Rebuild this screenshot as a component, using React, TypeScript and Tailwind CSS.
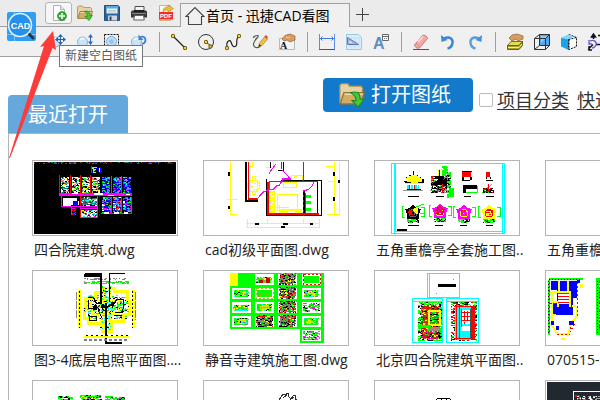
import type { ReactNode } from 'react';

const RED = '#ff0000';
const GREEN = '#00ff00';
const YELLOW = '#ffff00';
const CYAN = '#00ffff';
const MAGENTA = '#ff00ff';
const BLUE = '#0000ff';
const BLACK = '#000000';
const WHITE = '#ffffff';

type NoiseProps = {
  x: number;
  y: number;
  w: number;
  h: number;
  colors: string[];
  density?: number;
  seed?: number;
};

// Dense linework collapses to coloured specks at thumbnail size
function Noise({ x, y, w, h, colors, density = 0.5, seed = 1 }: NoiseProps) {
  const paths = colors.map(() => '');
  let s = (seed * 7919 + x * 131 + y * 17 + 11) % 2147483647;
  const rand = () => {
    s = (s * 48271) % 2147483647;
    return s / 2147483647;
  };
  for (let i = 0; i < 5; i++) rand();
  for (let j = 0; j < h; j++) {
    let i = 0;
    while (i < w) {
      // short runs read as strokes rather than as grain
      const run = Math.min(w - i, rand() < 0.45 ? 2 : 1);
      const hit = rand() < density;
      const k = Math.floor(rand() * colors.length);
      if (hit) paths[k] += `M${x + i} ${y + j}h${run}v1h-${run}z`;
      i += run;
    }
  }
  return (
    <>
      {paths.map((d, i) => (
        <path key={i} d={d} fill={colors[i]} />
      ))}
    </>
  );
}

function Thumb({ children }: { children?: ReactNode }) {
  return (
    <svg viewBox="0 0 142 72" className="block w-full h-[72px]" shapeRendering="crispEdges" fill="none" aria-hidden="true">
      {children}
    </svg>
  );
}

function CourtyardThumb() {
  const bright = [WHITE, GREEN, YELLOW, '#008080', BLACK, '#ff8080', WHITE];
  const cool = [CYAN, '#4080ff', MAGENTA, '#008080', BLACK, GREEN, '#8080ff'];
  return (
    <Thumb>
      <rect width="142" height="72" fill={BLACK} />
      <Noise x={0} y={0} w={142} h={2} colors={['#800000', '#008040', '#202080', '#606060', '#400000']} density={0.55} />
      <path d="M57 4h1v7h-1z" fill={RED} />
      <Noise x={58} y={5} w={5} h={6} colors={[CYAN, BLUE, '#80ff80']} density={0.7} />
      <path d="M65 5h2v1h1v4h-1v1h-2v-1h-1v-4h1z" fill={BLUE} />
      <path d="M65 6h1v4h-1z" fill={WHITE} />
      {[27, 38, 48, 58].map((x) => (
        <Noise key={x} x={x} y={15} w={8} h={16} colors={bright} density={0.9} />
      ))}
      {[68, 79, 89].map((x) => (
        <g key={x}>
          <rect x={x} y="15" width="8" height="16" fill={BLUE} />
          <Noise x={x} y={15} w={8} h={16} colors={cool} density={0.55} />
          <rect x={x} y="36" width="8" height="14" fill={BLUE} />
          <Noise x={x} y={35} w={9} h={16} colors={[...cool, RED, WHITE, MAGENTA]} density={0.75} />
        </g>
      ))}
      <path d="M77 14h1v17h-1zM87 14h1v17h-1zM77 35h1v16h-1zM87 35h1v16h-1zM97 35h1v16h-1z" fill={MAGENTA} />
      <path d="M25 13h1v19h-1zM36 13h1v19h-1zM46 13h1v43h-1zM56 13h1v18h-1z" fill={RED} />
      <path d="M25 31h73v3h-73z" fill={MAGENTA} />
      <path d="M38 31h6v1h-6zM60 31h9v2h-9zM74 33h6v1h-6zM92 32h4v1h-4z" fill={WHITE} />
      <path d="M27 34h1v11h-1zM27 44h37v1h-37zM63 34h1v22h-1zM46 55h18v1h-18zM46 46h18v1h-18zM37 45h1v8h-1z" fill={MAGENTA} />
      <path d="M29 36h14v3h2v4h-8v1h-8z" fill={WHITE} />
      <path d="M39 39h5v5h-5z" fill={BLUE} />
      <path d="M48 36h15v7h-15z" fill="#408080" />
      <Noise x={47} y={35} w={16} h={9} colors={[WHITE, '#505050', CYAN, '#204040', GREEN]} density={0.6} />
      <Noise x={47} y={48} w={16} h={7} colors={[CYAN, WHITE, MAGENTA, YELLOW, '#408080', WHITE]} density={0.85} />
      <Noise x={38} y={46} w={4} h={7} colors={[BLUE, RED, MAGENTA]} density={0.7} />
      <path d="M67 51h31v1h-31z" fill={MAGENTA} />
      <path d="M70 50h5v2h-5zM80 50h5v2h-5zM90 50h4v2h-4z" fill={WHITE} />
      <path d="M65 34h1v20h-1z" fill={BLUE} />
    </Thumb>
  );
}

function FloorPlanThumb() {
  return (
    <Thumb>
      <g stroke={YELLOW}>
        <path d="M25.500 0v53M22 37.500h11M25 52.500h8M129.500 0v53M134.500 0v53M121 4.500h8M123 19.500h6M122 52.500h13" />
        <path d="M41 61.500h74M41 65.500h74M42.500 57v9M62.500 57v5M98.500 57v5M114.500 57v9" />
        <path d="M43.500 0v4.500h4v-4.500" />
        <path d="M44.500 18.500h8v11h-8zM47.500 14.500h3v4h-3zM47.500 29.500h3v3h-3zM42.500 21.500h2v5h-2zM52.500 20.500h2v6h-2z" />
        <path d="M78.500 20.500h13v5h-13zM72.500 32.500h20v16h-20zM64 45.500h20M74.500 42.500v9M76 47.500h20v5h-20" />
        <path d="M86.500 13.500h11v5h-11zM61 5.500h7v-5" />
      </g>
      <path d="M64 29h6v22h-6z" fill={YELLOW} />
      <Noise x={65} y={29} w={4} h={22} colors={[WHITE]} density={0.3} />
      <path d="M75 48h8v4h-8zM90 48h7v4h-7zM89 14h3v2h-3z" fill={YELLOW} />
      <Noise x={46} y={20} w={6} h={9} colors={[YELLOW]} density={0.35} />
      <path d="M41 0h1v38h11v2h-13v-40zM61 17h1v37h-1zM61 53h56v1h-56zM116 18h1v36h-1zM76 18h41v1h-41zM98 28h2v25h-2zM78 0h1v9h-6v-1h5zM112 20h1v32h-1zM65 0h1v6h-1z" fill={BLACK} />
      <path d="M43 0h1v36h9v2h-10zM62 20h2v32h-2zM62 51h52v2h-52zM76 0h1v7h-1zM98 0h1v19h-1zM64 19h49v1h-49zM100 31h1v21h-1z" fill={RED} />
      <path d="M98.500 28v26" stroke={RED} strokeDasharray="2 3" />
      <path d="M52.500 37l2-3 4-4 5-2 5-1 3-3 3-1 3-5M77 8l4 4 2 2 2 3M64 12l3-5 4-5M99 29l5-2 3-3 2-4M64.500 27v-7" stroke={MAGENTA} />
      <path d="M77 16h9v2h-9z" fill={MAGENTA} />
      <path d="M23 10h2v4h-2zM23 44h2v3h-2zM128 10h2v4h-2zM128 35h2v4h-2zM133 18h2v3h-2zM50 61h4v2h-4zM78 61h5v2h-5zM105 61h3v2h-3zM76 64h4v2h-4z" fill={BLACK} />
      <path d="M101 33h5v3h-5zM101 39h5v3h-5zM101 46h5v3h-5z" fill={GREEN} />
    </Thumb>
  );
}

function Rosette({ x, y, fill, inner }: { x: number; y: number; fill: string; inner: string }) {
  return (
    <g>
      <path d={`M${x - 9} ${y - 6}h-2v11h3M${x + 8} ${y - 5}h3v9h-3`} stroke={GREEN} />
      <path d={`M${x} ${y - 8}l3 4 5 1-2 5 0 5h-12l0-5-2-5 5-1z`} fill={fill} />
      <path d={`M${x} ${y - 3}l4 3-1 4h-6l-1-4z`} stroke={inner} />
      <Noise x={x - 3} y={y - 2} w={7} h={5} colors={[inner, RED]} density={0.35} />
      <Noise x={x - 6} y={y + 7} w={12} h={4} colors={[GREEN, BLACK, GREEN]} density={0.8} />
    </g>
  );
}

function PavilionThumb() {
  return (
    <Thumb>
      <path d="M15 1h114v1h-114zM15 1h1v71h-1zM128 1h1v71h-1zM15 71h114v1h-114zM18 2h1v69h-1zM19 2h1v68h-1zM126 2h1v69h-1zM18 69h108v1h-108z" fill={CYAN} />
      <path d="M37 9h1v4h-1zM33 13h9v2h-9zM30 15h15v2h-15z" fill={BLACK} />
      <path d="M32 15l4-2h4l6 4h-17zM29 19l6-2h7l5 2v3h-18z" fill={YELLOW} />
      <path d="M28 19h3v1h4v1h-6zM42 20h4v-3h2v4h-6z" fill={BLACK} />
      <path d="M31 23h2v4h-2zM35 23h2v4h-2zM39 23h2v4h-2zM42 23h1v4h-1z" fill={CYAN} />
      <path d="M33.500 23v5M38.500 23v5" stroke={RED} />
      <Noise x={30} y={27} w={15} h={2} colors={[BLACK]} density={0.85} />
      <path d="M27 28.500h20M54 28.500h20" stroke="#999999" />
      <Noise x={55} y={14} w={16} h={17} colors={[BLACK, BLACK, BLACK, RED, GREEN, '#888888']} density={0.75} />
      <path d="M62 8h2v6h4v3h-9v-3h3z" fill={BLACK} />
      <path d="M56 22l8-6 8 4-3 4z" fill={BLACK} />
      <path d="M61.500 23v8M66.500 22v9" stroke={RED} />
      <Noise x={66} y={4} w={6} h={10} colors={[GREEN]} density={0.85} />
      <Noise x={71} y={10} w={4} h={26} colors={[GREEN, GREEN, BLACK]} density={0.85} />
      <path d="M73 26h5v9h-5z" fill={GREEN} />
      <path d="M62.500 14V7.500h5" stroke={YELLOW} />
      <path d="M86 10h9v5h-9zM110 10h4v5h-4z" fill={RED} />
      <path d="M86 9h10v1h-10zM86 15h2v3h-2zM94 15h2v3h-2zM110 15h1v2h-1zM114 15h1v2h-1z" fill={BLACK} />
      <path d="M87 23h14v4h-11v4h-3z" fill={BLACK} />
      <path d="M101.500 24v6M90 30.500h12M116 22l-9 8h10" stroke={GREEN} />
      <Noise x={107} y={26} w={11} h={5} colors={[BLACK, BLACK, RED]} density={0.85} />
      <path d="M112.500 22v7" stroke={RED} />
      <Rosette x={37} y={50} fill={BLACK} inner="#606060" />
      <path d="M38 46h4v6h-2l-3-3z" fill={YELLOW} />
      <path d="M33 47l4 2-2 4-3-2z" fill={RED} />
      <path d="M40 45l8-3M44 51.500h4" stroke={GREEN} />
      <Rosette x={64} y={49} fill={MAGENTA} inner={YELLOW} />
      <path d="M64 44l5 3-2 6h-6l-2-6z" fill="#dd1010" />
      <Noise x={60} y={46} w={8} h={7} colors={[YELLOW, MAGENTA]} density={0.25} />
      <Rosette x={88} y={50} fill={MAGENTA} inner={YELLOW} />
      <Rosette x={113} y={50} fill={YELLOW} inner={RED} />
      <path d="M32 34.500h11M60 34.500h8M88 34.500h7M110 34.500h8M32 63.500h11M59 63.500h8M84 63.500h7M110 63.500h7M86 18.500h8M110 18.500h7" stroke={BLACK} />
      <path d="M21 67h10v2h-10z" fill={BLACK} />
    </Thumb>
  );
}

function LightingThumb() {
  return (
    <Thumb>
      <Noise x={50} y={6} w={44} h={2} colors={['#808080']} density={0.6} />
      <Noise x={50} y={9} w={45} h={3} colors={[GREEN, GREEN, '#909090']} density={0.65} />
      <Noise x={54} y={23} w={39} h={24} colors={[BLACK, YELLOW, CYAN, GREEN, '#808080']} density={0.4} />
      <path d="M51 26h10v-6h6v-4h13v3h13v10h2v13h-6v7h-12v10h-9v-8h-14v-5h-4v-9h1z" stroke={YELLOW} strokeWidth="3" />
      <path d="M70 17v40M76 17v38M57 28h28v15h-27z" stroke={YELLOW} strokeWidth="2" />
      <Noise x={66} y={14} w={11} h={44} colors={[BLACK, YELLOW, CYAN, GREEN, YELLOW]} density={0.45} />
      <Noise x={50} y={28} w={45} h={14} colors={[YELLOW, CYAN, GREEN, BLACK]} density={0.2} />
      <path d="M53.500 25.500h6l3 6h5l5 3 8-3 2-4h7v8l-2 5h-7M54.500 28v8h5l3-5M64 38l4 8M55.500 44.500h7v4h-7zM80 43.500h8M61 32l5 7" stroke={BLACK} />
      <path d="M59 34h4v4h-4zM67 33h5v3h-5zM77 30h3v4h-3z" fill={BLACK} />
      <path d="M50 2h18v3h-18zM66 2h2v29h-2zM75 1h1v29h-1zM51 1h17v1h-17zM76 1h15v1h-15zM71 31h2v40h-2zM71 70h17v2h-17z" fill={BLACK} />
      <path d="M45 18v38M99 18v38" stroke={YELLOW} strokeWidth="3" strokeDasharray="3 1" />
      <path d="M45.500 19v37M98.500 19v37" stroke={BLACK} strokeDasharray="2 2" />
      <path d="M42.500 20v27M101.500 20v28" stroke="#808080" strokeDasharray="8 1" />
      <path d="M50 65h45" stroke={YELLOW} strokeWidth="2" />
      <path d="M52 63.500h42" stroke={BLACK} strokeDasharray="2 3" />
      <path d="M50 68h45" stroke="#808080" strokeWidth="2" strokeDasharray="3 2" />
    </Thumb>
  );
}

const SHEETS = [
  [27, 3, 'cover'], [50, 3, 'elev'], [73, 3, 'dark'], [97, 3, 'roof'],
  [27, 17, 'plan'], [50, 17, 'roof'], [73, 17, 'dark'], [97, 17, 'plan'],
  [27, 31, 'elev'], [50, 31, 'plan'], [73, 31, 'dark'], [97, 31, 'parts'],
  [27, 45, 'plan'], [50, 45, 'dark'], [73, 45, 'dark'], [97, 45, 'plan'],
  [97, 59, 'parts'],
] as const;

function TempleThumb() {
  return (
    <Thumb>
      <path d="M25 1h94v70h-24v-14h-70z" fill={GREEN} />
      <path d="M25 1h8v13h-8z" fill={YELLOW} />
      {SHEETS.map(([x, y, kind]) => {
        if (kind === 'cover') return null;
        return (
          <g key={`${x}-${y}`}>
            <rect x={x} y={y - 1} width="19" height="11" fill={WHITE} />
            {kind === 'dark' && (
              <>
                <rect x={x + 2} y={y - 1} width="15" height="10" fill="#808080" />
                <Noise x={x + 1} y={y - 2} w={17} h={12} colors={[BLACK, BLACK, RED, YELLOW, GREEN, '#408040']} density={0.65} />
              </>
            )}
            {kind === 'roof' && (
              <>
                <rect x={x + 2} y={y + 1} width="15" height="7" fill={GREEN} />
                <rect x={x + 1.5} y={y - 0.5} width="17" height="10" stroke={y < 10 ? RED : '#a0c020'} strokeDasharray="2 2" />
                {y > 10 && <path d={`M${x + 2} ${y + 8}l7-4 8 4`} stroke="#c0a000" />}
              </>
            )}
            {kind === 'elev' && (
              <>
                <rect x={x + 2} y={y + 2} width="14" height="6" fill="#60c040" />
                <Noise x={x + 1} y={y + 2} w={16} h={6} colors={[YELLOW, GREEN, BLACK, GREEN]} density={0.55} />
                {y < 10 ? (
                  <path d={`M${x + 4} ${y + 5}h4v3h-4zM${x + 11} ${y + 3}h4v5h-4z`} fill="#cc0000" />
                ) : (
                  <path d={`M${x + 4} ${y + 7}h11v1h-11z`} fill={CYAN} />
                )}
              </>
            )}
            {kind === 'plan' && (
              <>
                <rect x={x + 2} y={y + 1} width="14" height="7" fill={GREEN} />
                <rect x={x + 5} y={y + 2} width="9" height="5" fill="#d8e010" />
                <Noise x={x + 2} y={y + 1} w={15} h={7} colors={[YELLOW, CYAN, GREEN, BLACK, GREEN, '#808080']} density={0.4} />
              </>
            )}
            {kind === 'parts' && (
              <Noise x={x + 1} y={y} w={17} h={9} colors={[GREEN, BLACK, GREEN, '#808080', GREEN, MAGENTA]} density={0.6} />
            )}
          </g>
        );
      })}
    </Thumb>
  );
}

function BeijingThumb() {
  return (
    <Thumb>
      <path d="M51.500 1.500h32v24h-32zM53.500 1v24M36.500 26.500h30v44h-30zM70.500 26.500h32v44h-32zM37 29.500h29M71 29.500h31" stroke={CYAN} />
      <path d="M62 12h18v3h-18z" fill={BLACK} />
      <path d="M77 7h1v1h-1zM60 21h1v1h-1z" fill="#909090" />
      <Noise x={42} y={30} w={24} h={39} colors={[GREEN, GREEN, BLACK, GREEN]} density={0.75} />
      <rect x="46" y="34" width="17" height="33" fill="#cc2010" />
      <Noise x={45} y={33} w={19} h={34} colors={[RED, YELLOW, GREEN, MAGENTA, '#805020', BLACK]} density={0.6} />
      <path d="M52.500 38.500h11v14h-11z" stroke={YELLOW} strokeWidth="2" />
      <path d="M54 41h8v11h-8z" fill="#20a030" />
      <Noise x={54} y={41} w={8} h={11} colors={[GREEN, BLACK, YELLOW]} density={0.4} />
      <path d="M42 54h11v3h12" stroke={GREEN} strokeWidth="3" />
      <path d="M53 55h11v4h-11z" fill="#b08080" />
      <Noise x={75} y={30} w={26} h={39} colors={[BLACK, GREEN, '#008000', RED]} density={0.6} />
      <rect x="79" y="34" width="19" height="34" fill={CYAN} />
      <path d="M95 34h4v34h-4z" fill={RED} />
      <path d="M78 34.500h20M80.500 31v37M83.500 34v33M78 66.500h20" stroke={RED} />
      <path d="M86 38h9v14h-9z" fill={WHITE} />
      <path d="M86 40.500h8M86 44.500h8M86 48.500h8M88.500 39v13M91.500 39v13" stroke={RED} />
      <path d="M87.500 53v-4h4v4" stroke={YELLOW} />
      <path d="M85 54h9v5h-9z" fill={WHITE} />
      <path d="M85.500 37v18M94.500 37v30" stroke="#306060" />
    </Thumb>
  );
}

function VillaThumb() {
  return (
    <Thumb>
      <path d="M2 6h34v2h-34zM1 8h2v55h-2zM49 6h4v57h-4z" fill={GREEN} />
      <path d="M2 7.500h33M1.500 9v53M50.500 9v52" stroke={BLACK} strokeDasharray="1 2" />
      <path d="M4 9h26v17h-4v17h-22v-13h6v-12h-6z" fill={BLUE} />
      <path d="M11 20h11v12h-11z" fill={WHITE} />
      <path d="M11.500 9v10M20.500 9v10M3 19.500h19M4 29.500h7v5M22.500 19v16M4 42.500h5M25 34h4M4.500 19v34l6 9h11l2-9 6-9v-9" stroke={YELLOW} strokeWidth="2" />
      <path d="M11 21.500h11M11 24.500h11M11 27.500h11M11 30.500h11" stroke={RED} />
      <path d="M2.500 10v50M30.500 10v34M3 31.500h7M10 62.500h13M23 55v5l5-9" stroke={RED} strokeDasharray="2 2" />
      <path d="M4 49h3v4h-3zM9 54h3v4h-3zM22 49h5v4h-5zM30 8h3v3h-3z" fill={BLUE} />
      <path d="M33 12h3v4h-3zM14 66h4v2h-4z" fill={YELLOW} />
      <Noise x={52} y={8} w={5} h={50} colors={[MAGENTA, BLUE, '#808080', YELLOW]} density={0.9} />
    </Thumb>
  );
}

function ElevationThumb() {
  return (
    <Thumb>
      <Noise x={24} y={14} w={12} h={8} colors={[GREEN, BLACK]} density={0.75} />
      <path d="M36 16h3M46 14h21M71 15h8" stroke={GREEN} strokeWidth="2" />
      <Noise x={46} y={13} w={22} h={9} colors={[GREEN, YELLOW, BLACK, '#808080']} density={0.75} />
      <Noise x={71} y={15} w={20} h={8} colors={[BLACK, '#808080', GREEN]} density={0.7} />
    </Thumb>
  );
}

function SketchThumb() {
  return (
    <Thumb>
      <path d="M72 21l6-9h3v-1h2v3l3 3 3-4h1v3l3 4M78 16l4-3M85 18l4-3" stroke="#303030" />
    </Thumb>
  );
}

function ArcThumb() {
  return (
    <Thumb>
      <path d="M54 18.500h5l3-2h11l3 2h5M65.500 16v4M70.500 16v4" stroke={BLACK} />
    </Thumb>
  );
}

function SectionThumb() {
  return (
    <Thumb>
      <rect width="142" height="72" fill="#212830" />
      <path d="M26.500 72V9.500H142" stroke={WHITE} />
      <path d="M28 13h5v2h-5z" fill={RED} />
      <Noise x={30} y={14} w={10} h={6} colors={[WHITE, '#808080']} density={0.5} />
      <Noise x={41} y={14} w={16} h={6} colors={[WHITE, '#a0a0a0']} density={0.5} />
    </Thumb>
  );
}

const files: { name: string; thumb: ReactNode }[] = [
  { name: '四合院建筑.dwg', thumb: <CourtyardThumb /> },
  { name: 'cad初级平面图.dwg', thumb: <FloorPlanThumb /> },
  { name: '五角重檐亭全套施工图..', thumb: <PavilionThumb /> },
  { name: '五角重檐亭全套施工图..', thumb: <Thumb /> },
  { name: '图3-4底层电照平面图....', thumb: <LightingThumb /> },
  { name: '静音寺建筑施工图.dwg', thumb: <TempleThumb /> },
  { name: '北京四合院建筑平面图..', thumb: <BeijingThumb /> },
  { name: '070515-1.dwg', thumb: <VillaThumb /> },
  { name: '立面图.dwg', thumb: <ElevationThumb /> },
  { name: '大样图.dwg', thumb: <SketchThumb /> },
  { name: '节点图.dwg', thumb: <ArcThumb /> },
  { name: '剖面图.dwg', thumb: <SectionThumb /> },
];

function Icon({ children }: { children: ReactNode }) {
  return (
    <svg viewBox="0 0 16 16" className="w-4 h-4 shrink-0 overflow-visible" fill="none" aria-hidden="true">
      {children}
    </svg>
  );
}

function Dot({ x, y }: { x: number; y: number }) {
  return <rect x={x - 1.5} y={y - 1.5} width="3" height="3" rx="0.8" fill="#ffd21e" stroke="#5a4300" />;
}

function FolderShape() {
  return (
    <>
      <path d="M.5 13V2L1.500 1h4l1 1.500h7l1 1v3" fill="#e6d3a3" stroke="#a98a4a" strokeWidth=".8" />
      <path d="M.8 13.500l2.200-7h12.500l-2 7z" fill="#d2ad62" stroke="#94733a" strokeWidth=".8" />
      <path d="M3.500 7.500h11" stroke="#f3e2b4" strokeWidth=".8" />
      <path d="M7 6.500c4-1 6 0 6 4h2.500l-3.700 5-3.800-4h2.500c0-2.500-1-3.500-3.500-5z" fill="#45c83c" stroke="#1f8a24" strokeWidth=".7" />
    </>
  );
}

const fileTools: { label: string; icon: ReactNode }[] = [
  {
    label: '新建空白图纸',
    icon: (
      <>
        <path d="M2.500.5h7l4 4v11h-11z" fill="#fdfdfd" stroke="#b0b0b0" />
        <path d="M9.500.5v4h4" fill="#e8e8e8" stroke="#b0b0b0" />
        <circle cx="11" cy="11" r="4.500" fill="#2faa32" stroke="#1c8423" strokeWidth=".6" />
        <path d="M11 8v6M8 11h6" stroke="#fff" strokeWidth="1.600" />
      </>
    ),
  },
  { label: '打开', icon: <FolderShape /> },
  {
    label: '保存',
    icon: (
      <>
        <path d="M.5.5h13.500l1.500 1.500v13.500h-15z" fill="#2e6399" stroke="#254f7c" />
        <path d="M2.500 1h11v7.500h-11z" fill="#e9f2fa" />
        <path d="M2.500 1h11v2.500h-11z" fill="#5fa8e6" />
        <path d="M4 10.500h9v5h-9z" fill="#cfd6dc" />
        <path d="M5.500 11.500h2v4h-2z" fill="#27486a" />
        <path d="M4 5.500h8M4 7h8" stroke="#b9c9d8" />
      </>
    ),
  },
  {
    label: '打印',
    icon: (
      <>
        <path d="M4 1.500h9v5h-9z" fill="#f4f4f4" stroke="#505050" />
        <path d="M0 6.500l1-1h14l1 1v6h-16z" fill="#3a3a3a" />
        <path d="M3 5h10v2h-10z" fill="#1e1e1e" />
        <path d="M3.500 10.500h9l.8 4.500h-10.600z" fill="#fafafa" stroke="#606060" />
        <path d="M1 8.500h14" stroke="#858585" />
      </>
    ),
  },
  {
    label: '导出PDF',
    icon: (
      <>
        <path d="M1.500.5h11v15h-11z" fill="#fffaf0" stroke="#d4b088" />
        <path d="M5 7c0-4 2-5 5-5V0l5.500 3.500L10 7V5C8 5 6.500 5 5 7z" fill="#f0bd39" stroke="#b8862a" strokeWidth=".6" />
        <rect x="1" y="7" width="14" height="7.500" fill="#ee3124" />
        <text x="8" y="13" textAnchor="middle" fontSize="6" fontWeight="700" fill="#fff" className="font-['Liberation_Sans',sans-serif]">PDF</text>
      </>
    ),
  },
];

const lens = (
  <>
    <path d="M3.500 11l-3 4" stroke="#a5762e" strokeWidth="2" />
    <circle cx="5.500" cy="8" r="5" fill="#c8e4f8" stroke="#8bb4d6" />
    <path d="M3 6c1-1.500 3-2 4.500-1" stroke="#fff" strokeWidth="1.500" />
  </>
);

const toolGroups: { label: string; icon: ReactNode }[][] = [
  [
    {
      label: '平移缩放',
      icon: (
        <>
          {lens}
          <path d="M10.500 0l2.500 3h-5zM10.500 11l-2.500-3h5zM5 5.500l3-2.500v5zM16 5.500l-3-2.500v5zM10 3h1v5h-1zM8 5h5v1h-5z" fill="#2c5fae" />
        </>
      ),
    },
    {
      label: '动态缩放',
      icon: (
        <>
          {lens}
          <path d="M13.500 0l2.500 3.500h-5zM13.500 11l-2.500-3.500h5zM13 3h1v5h-1z" fill="#2c68bd" />
        </>
      ),
    },
    {
      label: '窗口缩放',
      icon: (
        <>
          <path d="M.5.500h14v14h-14z" stroke="#111" strokeDasharray="2 1" />
          <circle cx="7.500" cy="7.500" r="5" fill="#c2e2f8" stroke="#7ba9cf" />
          <circle cx="7.500" cy="7.500" r="2.500" fill="#91c6ef" />
        </>
      ),
    },
    {
      label: '上一视图',
      icon: (
        <>
          {lens}
          <path d="M8.500 3.500c3-2 6-.5 6 2.500 0 2-1.500 3.500-3.500 4" stroke="#3d83da" strokeWidth="1.800" />
          <path d="M7.500.5v5.500h5z" fill="#3d83da" />
        </>
      ),
    },
  ],
  [
    {
      label: '直线',
      icon: (
        <>
          <path d="M2 2l12 12" stroke="#222" strokeWidth="1.200" />
          <Dot x={2} y={2} />
          <Dot x={14} y={14} />
        </>
      ),
    },
    {
      label: '圆',
      icon: (
        <>
          <circle cx="8" cy="8" r="7.500" stroke="#333" />
          <path d="M8 8l5 4" stroke="#333" />
          <Dot x={8} y={8} />
          <Dot x={12.5} y={12.5} />
        </>
      ),
    },
    {
      label: '样条曲线',
      icon: (
        <>
          <path d="M2 13c-1-6 3-8 4-5s2 6 5 4c2-2-1-7 3-10" stroke="#222" strokeWidth="1.200" />
          <Dot x={2} y={14} />
          <Dot x={14} y={2} />
        </>
      ),
    },
    {
      label: '手绘',
      icon: (
        <>
          <path d="M1 3.500c4-3 7-2.500 4 .5-2 2-4 4-3.500 7 .5 3 4 3 6 2" stroke="#555" strokeWidth="1.200" />
          <path d="M6.500 13l1-4 5.500-6.500 2.500 2.500-5.500 6.500z" fill="#f6c338" stroke="#8a6a22" strokeWidth=".6" />
          <path d="M12.500 2.500l1.500-1.500 2 2-1.500 2z" fill="#e04c35" />
          <path d="M6.500 13l.8-3 2 2z" fill="#333" />
        </>
      ),
    },
    {
      label: '文字',
      icon: (
        <>
          <path d="M.5 4.500h15v11h-15z" fill="#f4f4f4" stroke="#bababa" />
          <path d="M3 5l3-3.500 5-1.500 5 2v4l-5 2-3-2-3 1z" fill="#d99c63" stroke="#94602f" strokeWidth=".7" />
          <path d="M7 3l4 1" stroke="#f3c798" />
          <text x="1" y="15" fontSize="10" fontWeight="700" fill="#111" className="font-['Liberation_Serif',serif]">A</text>
        </>
      ),
    },
  ],
  [
    {
      label: '标注',
      icon: (
        <>
          <path d="M.5 0v16M15.500 0v16" stroke="#5b8def" />
          <path d="M1 4.500h14M3.500 2.500l-2 2 2 2M12.500 2.500l2 2-2 2" stroke="#3d76e8" />
          <path d="M0 15.500h16" stroke="#555" />
        </>
      ),
    },
    {
      label: '测量面积',
      icon: (
        <>
          <path d="M.5.500h12l3 3v12h-15z" fill="#d9eefa" stroke="#9cc7e0" />
          <path d="M3 4h11M3 8h11M3 12h11M5 2v12M9 2v12M13 3v12" stroke="#b6dcf1" strokeWidth=".6" />
          <path d="M1.500 3.500v7h11z" fill="#a9b4e0" stroke="#6673b3" />
          <path d="M3.500 7v2h3z" fill="#eef" />
        </>
      ),
    },
    {
      label: '文字查找',
      icon: (
        <>
          <text x="0" y="15" fontSize="16" fontWeight="700" fill="#5d8dc4" className="font-['Liberation_Sans',sans-serif]">A</text>
          <path d="M9.500.500h6v6h-6zM9.500 2.500h6" fill="#f8f8f8" stroke="#666" />
          <path d="M11 4.500h3" stroke="#777" strokeDasharray="1 1" />
        </>
      ),
    },
  ],
  [
    {
      label: '删除',
      icon: (
        <>
          <path d="M0 15.500h16" stroke="#555" />
          <path d="M1.500 11l8-9.500c2-1 5 1 5 3l-8 9.500c-2 1-5-1-5-3z" fill="#f1aaa5" stroke="#bd6661" strokeWidth=".8" />
          <path d="M2 11c1-2 4 0 4.500 2.500" stroke="#d98a84" />
          <path d="M5 8l5-5.500" stroke="#fde0dd" strokeWidth="1.500" />
        </>
      ),
    },
    {
      label: '撤销',
      icon: (
        <>
          <path d="M4 4.500c6-3 9 1 8.500 4.500-.5 3-2.500 5-5 5.500" stroke="#3c86d8" strokeWidth="2.500" />
          <path d="M1 1l.5 7L7.500 6z" fill="#3c86d8" />
        </>
      ),
    },
    {
      label: '重做',
      icon: (
        <>
          <path d="M12 4.500c-6-3-9 1-8.500 4.500.5 3 2.500 5 5 5.500" stroke="#5a9ee0" strokeWidth="2.500" />
          <path d="M15 1l-.5 7L8.500 6z" fill="#4a92dc" />
        </>
      ),
    },
  ],
  [
    {
      label: '图层',
      icon: (
        <>
          <path d="M.5 11.500l3.500-4h11.500l-3.500 4z" fill="#e2dc50" stroke="#77721c" />
          <path d="M.5 11.500h11.500l3.500-4v4l-3.500 4h-11.500z" fill="#a8a22c" stroke="#65611a" />
          <path d="M1 13.500h11l3-3.500" stroke="#f3ee92" />
          <path d="M2 4l3-3 5-1 6 2v3l-5 2-2-2-4 2z" fill="#d99c63" stroke="#94602f" strokeWidth=".7" />
        </>
      ),
    },
    {
      label: '三维视图',
      icon: (
        <>
          <path d="M5 .5h10.500v10.500h-10.500z" fill="#58a6ee" />
          <path d="M7 2l7 0-7 7z" fill="#8ec8fa" />
          <path d="M.5 4.500h11v11h-11zM5.500.500h10v11h-10zM.5 4.500l5-4M11.500 4.500l4-4M.5 15.500l5-4M11.500 15.500l4-4" stroke="#333" />
        </>
      ),
    },
    {
      label: '视觉样式',
      icon: (
        <>
          <path d="M8 .5l7.500 3v9l-7.500 3z" fill="#fff" stroke="#111" strokeDasharray="2 1" />
          <path d="M0 4l8-3.500 4 2-4.500 3v10.500l-7.500-3.500z" fill="#19a3ea" />
          <path d="M0 4l8-3.500 4 2-4.500 3z" fill="#7bdcff" />
          <path d="M7.500 5.500v10M7.500 5.500l8-2" stroke="#111" strokeDasharray="2 1" />
        </>
      ),
    },
    {
      label: '旋转',
      icon: (
        <>
          <path d="M5.500 1v4M3.500 3l2-3 2 3zM8 10.500h8M0 15.500l5-5M1 12v4h3M10 1.500h3" stroke="#111" strokeWidth="1.500" />
          <path d="M2 7c4-2 7 1 6 4-1 2-2 3-4 3M1 6v4h3" stroke="#5b57d6" strokeWidth="1.300" />
        </>
      ),
    },
  ],
];

function ToolButton({ label, icon }: { label: string; icon: ReactNode }) {
  return (
    <button type="button" aria-label={label} className="flex items-center w-[27px] h-6 pl-[5px] shrink-0">
      <Icon>{icon}</Icon>
    </button>
  );
}

function AppLogo() {
  return (
    <svg viewBox="0 0 29 29" className="absolute left-[7px] top-3 w-[29px] h-[29px]" fill="none" role="img" aria-label="CAD">
      <rect width="29" height="29" rx="2" fill="#2f9df4" />
      <path d="M7.500 0v29M0 22.500h29" stroke="#79c3fa" />
      <circle cx="13" cy="13" r="11.500" fill="#2490ea" stroke="#e6f4ff" strokeWidth="1.500" />
      <path d="M22.500 22.500l3.500 3.500" stroke="#333" strokeWidth="3" strokeLinecap="round" />
      <text x="13.500" y="16.500" textAnchor="middle" fontSize="9" fontWeight="700" fill="#fff" className="font-['Liberation_Sans',sans-serif]">CAD</text>
    </svg>
  );
}

export default function App() {
  return (
    <div className="relative h-screen flex flex-col overflow-hidden bg-white text-[#222] font-['Open_Sans','Noto_Sans_CJK_SC',sans-serif]">
      <header className="shrink-0">
        <div className="flex items-end h-[27px] pl-[45px] bg-[#ebebeb] border-b border-[#a0a0a0]">
          <div className="flex items-center h-full">
            {fileTools.map((tool, idx) =>
              idx === 0 ? (
                <button key={tool.label} type="button" aria-label={tool.label} aria-describedby="new-tip" className="flex items-center w-[27px] h-[22px] pl-[5px] shrink-0 rounded-[3px] border border-[#b4b4b4] bg-[#f6f6f6]">
                  <Icon>{tool.icon}</Icon>
                </button>
              ) : (
                <ToolButton key={tool.label} {...tool} />
              ),
            )}
          </div>
          <button type="button" className="flex items-center h-6 w-[170px] -mb-px pl-1 shrink-0 border border-b-0 border-[#a0a0a0] bg-[#f0f0f0] text-sm text-black whitespace-nowrap">
            <svg viewBox="0 0 20 20" className="w-5 h-5 mr-px shrink-0" fill="none" stroke="#444" strokeWidth="1.100" aria-hidden="true">
              <path d="M1 10.500L10 1.500l9 9h-2.500v8h-13v-8z" />
            </svg>
            首页 - 迅捷CAD看图
          </button>
          <button type="button" aria-label="新建标签" className="flex items-center h-6 pl-[5px] shrink-0">
            <svg viewBox="0 0 15 15" className="w-[15px] h-[15px]" stroke="#444" aria-hidden="true">
              <path d="M7.500 1v13M1 7.500h13" />
            </svg>
          </button>
        </div>
        <div className="flex items-center h-[30px] pl-[45px] bg-[#f0f0f0] border-b border-[#a0a0a0]">
          {toolGroups.map((group, idx) => (
            <div key={idx} className="flex items-center shrink-0">
              {idx > 0 && <span className="w-px h-5 mx-1.5 bg-[#a0a0a0]" />}
              {group.map((tool) => (
                <ToolButton key={tool.label} {...tool} />
              ))}
            </div>
          ))}
        </div>
      </header>

      <main className="flex flex-col flex-1 min-h-0 pl-2 pt-[21px]">
        <div className="flex items-start h-[55px] shrink-0 whitespace-nowrap">
          <h2 className="self-end shrink-0 w-[120px] h-[38px] rounded-t-[4px] bg-[#65a8dc] text-white text-xl leading-10 text-center">最近打开</h2>
          <button type="button" className="flex items-center shrink-0 w-[150px] h-[34px] ml-[195px] pl-4 gap-1.5 rounded-[4px] bg-[#137acb] text-white text-xl leading-none">
            <svg viewBox="0 0 16 16" className="w-[26px] h-[26px]" fill="none" aria-hidden="true">
              <FolderShape />
            </svg>
            打开图纸
          </button>
          <div className="flex items-center shrink-0 h-6 mt-[10px] ml-1.5 text-lg leading-6 text-[#333]">
            <input id="by-project" type="checkbox" className="appearance-none w-3.5 h-3.5 mr-1 rounded-[2px] border border-[#bbb] bg-white" />
            <label htmlFor="by-project" className="mr-2 underline underline-offset-2">项目分类</label>
            <a href="#quick" className="underline underline-offset-2">快速</a>
          </div>
        </div>

        <div className="flex-1 min-h-0 overflow-hidden border-l border-t border-[#b4b4b4] pl-[23px] pt-[26px]">
          <ul className="grid grid-cols-[repeat(4,146px)] gap-x-[25px]">
            {files.map((file, idx) => (
              <li key={idx}>
                <a href={`#file-${idx}`} className="block">
                  <div className="border border-[#b4b4b4] p-px bg-white">{file.thumb}</div>
                  <p className="h-[34px] pl-0.5 text-sm leading-7 whitespace-nowrap">{file.name}</p>
                </a>
              </li>
            ))}
          </ul>
        </div>
      </main>

      <AppLogo />
      <svg viewBox="0 0 60 160" className="absolute left-0 top-0 w-[60px] h-40 pointer-events-none" aria-hidden="true">
        <path d="M53 31L40 47l4-1L9 158h1L52.500 48l3.500 2z" fill="#fc3b3b" />
      </svg>
      <div id="new-tip" role="tooltip" className="absolute left-[59px] top-[45px] px-[5px] border border-[#767676] bg-white text-xs leading-5 text-[#575757] whitespace-nowrap">
        新建空白图纸
      </div>
    </div>
  );
}
